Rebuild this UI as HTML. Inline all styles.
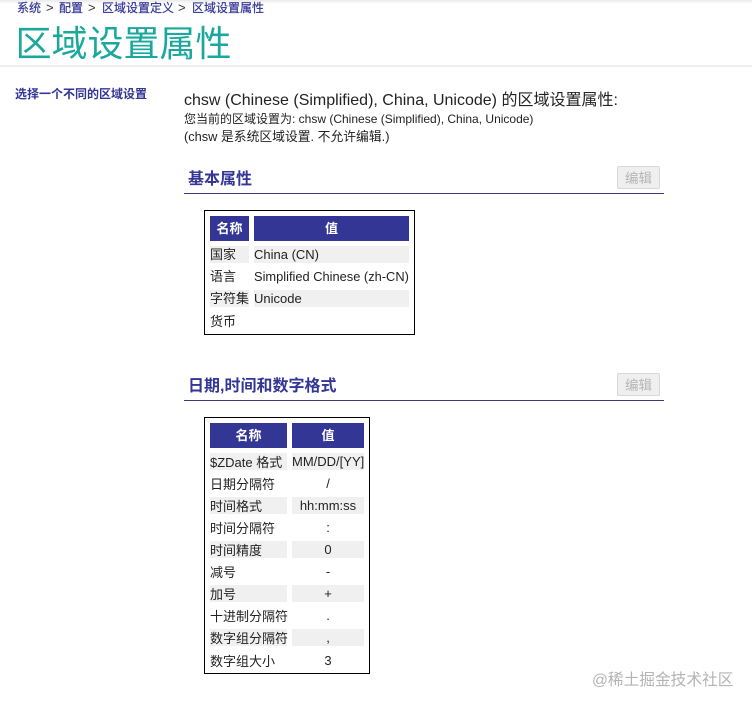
<!DOCTYPE html>
<html lang="zh-CN"><head><meta charset="utf-8"><title>区域设置属性</title>
<style>
html,body{margin:0;padding:0;background:#fff}
body{position:relative;width:752px;height:709px;overflow:hidden;font-family:"Liberation Sans","Noto Sans CJK SC",sans-serif;color:#222}
.a{position:absolute;white-space:nowrap}
.top{left:0;top:0;width:752px;height:4px;background:linear-gradient(#eaeaea,#fff)}
.rule{left:0;top:65px;width:752px;height:2px;background:#eeeeee}
.bc{top:1px;height:15px;line-height:15px;font-size:12px;color:#333695;-webkit-text-stroke:.2px #333695}
.sep{top:0;height:15px;line-height:15px;font-size:13px;color:#333}
.t{left:15.5px;top:20px;font-size:36px;line-height:48px;color:#1aa89e}
.side{left:15px;top:86px;font-size:12px;line-height:16px;font-weight:bold;color:#333695}
.l1{left:184px;top:92px;font-size:16px;line-height:18px;color:#222}
.l2{left:184px;top:112px;font-size:12px;line-height:15px;color:#222}
.l3{left:184px;top:129px;font-size:12.8px;line-height:16px;color:#222}
.h{left:188px;font-size:16px;line-height:20px;font-weight:bold;color:#333695}
.ln{left:184px;width:480px;height:1px;background:#3f3a80}
.btn{left:617px;width:41px;height:21px;border:1px solid #d8d8d8;border-radius:2px;background:#efefef;color:#b5b5b5;font-size:13.5px;line-height:23px;text-align:center}
.box{left:204px;border:1px solid #000;box-sizing:border-box;background:#fff}
.th{background:#333695;color:#fff;font-weight:bold;font-size:13px;text-align:center;height:25px;line-height:26px}
.g{background:#f0f0f0;height:17px}
.c{font-size:13px;line-height:17px;height:17px;color:#222}
.cen{text-align:center}
.wm{left:592px;top:671px;font-size:15.7px;line-height:20px;color:#b4b4b4}
</style></head>
<body>
<div class="a top"></div>
<div class="a rule"></div>
<div class="a bc" style="left:17px">系统</div>
<div class="a sep" style="left:46px">&gt;</div>
<div class="a bc" style="left:59px">配置</div>
<div class="a sep" style="left:88px">&gt;</div>
<div class="a bc" style="left:102px">区域设置定义</div>
<div class="a sep" style="left:178px">&gt;</div>
<div class="a bc" style="left:192px">区域设置属性</div>
<div class="a t">区域设置属性</div>
<div class="a side">选择一个不同的区域设置</div>
<div class="a l1">chsw (Chinese (Simplified), China, Unicode) 的区域设置属性:</div>
<div class="a l2">您当前的区域设置为: chsw (Chinese (Simplified), China, Unicode)</div>
<div class="a l3">(chsw 是系统区域设置. 不允许编辑.)</div>

<div class="a h" style="top:170px">基本属性</div>
<div class="a btn" style="top:166px">编辑</div>
<div class="a ln" style="top:193px"></div>

<div class="a box" style="top:210px;width:211px;height:125px"></div>
<div class="a th" style="left:210px;top:216px;width:39px">名称</div>
<div class="a th" style="left:254px;top:216px;width:155px">值</div>
<div class="a g" style="left:210px;top:246px;width:39px"></div>
<div class="a g" style="left:254px;top:246px;width:155px"></div>
<div class="a g" style="left:210px;top:290px;width:39px"></div>
<div class="a g" style="left:254px;top:290px;width:155px"></div>
<div class="a c" style="left:210px;top:246px">国家</div>
<div class="a c" style="left:254px;top:246px">China (CN)</div>
<div class="a c" style="left:210px;top:268px">语言</div>
<div class="a c" style="left:254px;top:268px;font-size:12.85px">Simplified Chinese (zh-CN)</div>
<div class="a c" style="left:210px;top:290px">字符集</div>
<div class="a c" style="left:254px;top:290px">Unicode</div>
<div class="a c" style="left:210px;top:313px">货币</div>

<div class="a h" style="top:377px">日期,时间和数字格式</div>
<div class="a btn" style="top:373px">编辑</div>
<div class="a ln" style="top:400px"></div>

<div class="a box" style="top:417px;width:166px;height:257px"></div>
<div class="a th" style="left:210px;top:423px;width:77px">名称</div>
<div class="a th" style="left:292px;top:423px;width:72px">值</div>

<div class="a g" style="left:210px;top:453px;width:77px"></div>
<div class="a g" style="left:292px;top:453px;width:72px"></div>
<div class="a g" style="left:210px;top:497px;width:77px"></div>
<div class="a g" style="left:292px;top:497px;width:72px"></div>
<div class="a g" style="left:210px;top:541px;width:77px"></div>
<div class="a g" style="left:292px;top:541px;width:72px"></div>
<div class="a g" style="left:210px;top:585px;width:77px"></div>
<div class="a g" style="left:292px;top:585px;width:72px"></div>
<div class="a g" style="left:210px;top:629px;width:77px"></div>
<div class="a g" style="left:292px;top:629px;width:72px"></div>

<div class="a c" style="left:210px;top:454px">$ZDate 格式</div>
<div class="a c cen" style="left:292px;top:453px;width:72px">MM/DD/[YY]</div>
<div class="a c" style="left:210px;top:476px">日期分隔符</div>
<div class="a c cen" style="left:292px;top:475px;width:72px">/</div>
<div class="a c" style="left:210px;top:498px">时间格式</div>
<div class="a c cen" style="left:292px;top:497px;width:72px">hh:mm:ss</div>
<div class="a c" style="left:210px;top:520px">时间分隔符</div>
<div class="a c cen" style="left:292px;top:519px;width:72px">:</div>
<div class="a c" style="left:210px;top:542px">时间精度</div>
<div class="a c cen" style="left:292px;top:541px;width:72px">0</div>
<div class="a c" style="left:210px;top:564px">减号</div>
<div class="a c cen" style="left:292px;top:563px;width:72px">-</div>
<div class="a c" style="left:210px;top:586px">加号</div>
<div class="a c cen" style="left:292px;top:585px;width:72px">+</div>
<div class="a c" style="left:210px;top:608px">十进制分隔符</div>
<div class="a c cen" style="left:292px;top:607px;width:72px">.</div>
<div class="a c" style="left:210px;top:630px">数字组分隔符</div>
<div class="a c cen" style="left:292px;top:629px;width:72px">,</div>
<div class="a c" style="left:210px;top:653px">数字组大小</div>
<div class="a c cen" style="left:292px;top:652px;width:72px">3</div>

<div class="a wm">@稀土掘金技术社区</div>
</body></html>
